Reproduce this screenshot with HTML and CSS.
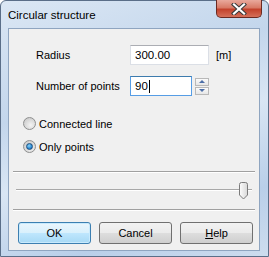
FILE: index.html
```html
<!DOCTYPE html>
<html lang="en">
<head>
  <meta charset="UTF-8" />
  <title>Circular structure</title>
  <link rel="stylesheet" href="styles.css">
</head>
<body>
  <div class="window">
    <div class="titlebar">
      <span class="title">Circular structure</span>
      <div class="close">
        <svg width="16" height="12" viewBox="0 0 16 12">
          <path d="M3 1.5 L13 10.5 M13 1.5 L3 10.5" stroke="#3a3a3a" stroke-width="4.2" stroke-linecap="square"/>
          <path d="M3 1.5 L13 10.5 M13 1.5 L3 10.5" stroke="#ffffff" stroke-width="2.2" stroke-linecap="square"/>
        </svg>
      </div>
    </div>

    <div class="client">
      <div class="row row-first">
        <label class="label">Radius</label>
        <div class="input radius">300.00</div>
        <span class="unit">[m]</span>
      </div>
      <div class="row">
        <label class="label">Number of points</label>
        <div class="input points focused">90<span class="caret"></span></div>
        <div class="spin">
          <div class="spin-btn"><span class="arrow up"></span></div>
          <div class="spin-btn"><span class="arrow down"></span></div>
        </div>
      </div>

      <div class="radios">
        <div class="radio-row"><span class="radio"></span>Connected line</div>
        <div class="radio-row"><span class="radio checked"></span>Only points</div>
      </div>

      <div class="separator"></div>

      <div class="slider">
        <div class="track"></div>
        <svg class="thumb" width="11" height="18" viewBox="0 0 11 18">
          <defs>
            <linearGradient id="tg" x1="0" y1="0" x2="1" y2="0">
              <stop offset="0" stop-color="#fdfdfd"/>
              <stop offset="1" stop-color="#d8d8d8"/>
            </linearGradient>
          </defs>
          <path d="M1.5 2.5 Q1.5 0.5 3.5 0.5 L7.5 0.5 Q9.5 0.5 9.5 2.5 L9.5 13 L5.5 17 L1.5 13 Z" fill="url(#tg)" stroke="#7b7b7b"/>
        </svg>
      </div>

      <div class="separator"></div>

      <div class="buttons">
        <button class="btn default">OK</button>
        <button class="btn">Cancel</button>
        <button class="btn"><u>H</u>elp</button>
      </div>
    </div>
  </div>
</body>
</html>
```

FILE: styles.css
```css
body {
  margin: 0;
  font-family: 'Liberation Sans', Arial, sans-serif;
  font-size: 11px;
  color: #000;
}
.window {
  width: 269px;
  height: 257px;
  box-sizing: border-box;
  padding: 0 9px 0 8px;
  border: 1px solid #5a6e88;
  border-radius: 6px 6px 0 0;
  background: linear-gradient(160deg, #dbe7f4 0%, #c3d6ec 35%, #d9e6f4 55%, #b9cfe9 80%, #cddcee 100%);
  display: flex;
  flex-direction: column;
}
.titlebar {
  height: 27px;
  display: flex;
  align-items: flex-start;
  justify-content: space-between;
}
.title {
  font-size: 11.5px;
  margin-top: 8px;
  margin-left: -1px;
  color: #000;
}
.close {
  width: 46px;
  height: 18px;
  margin-top: -1px;
  margin-right: -3px;
  box-sizing: border-box;
  border: 1px solid #6b2a22;
  border-top: none;
  border-radius: 0 0 5px 5px;
  background: linear-gradient(#e9a99c 0%, #d87a66 45%, #c3422c 55%, #d5705a 100%);
  display: flex;
  align-items: center;
  justify-content: center;
}
.client {
  width: 252px;
  height: 223px;
  box-sizing: border-box;
  margin-left: -1px;
  border: 1px solid #8fa5c0;
  background: #f0f0f0;
  display: flex;
  flex-direction: column;
}
.row {
  display: flex;
  align-items: center;
  height: 20px;
  margin-top: 11px;
  padding-left: 27px;
}
.row-first {
  margin-top: 16px;
}
.label {
  width: 94px;
}
.input {
  height: 20px;
  box-sizing: border-box;
  border: 1px solid #dbdfe6;
  border-top-color: #abadb3;
  background: #fff;
  padding: 3px 0 0 4px;
  font-size: 11.5px;
  display: flex;
  align-items: flex-start;
}
.radius {
  width: 79px;
}
.points {
  width: 62px;
}
.focused {
  border-color: #569de5;
  border-top-color: #3d7bad;
}
.caret {
  width: 1px;
  height: 13px;
  background: #000;
  margin-left: 1px;
}
.unit {
  margin-left: 7px;
}
.spin {
  margin-left: 3px;
  display: flex;
  flex-direction: column;
  gap: 1px;
}
.spin-btn {
  width: 14px;
  height: 8px;
  box-sizing: border-box;
  border: 1px solid #b9b9b9;
  background: linear-gradient(#fbfbfb, #e6e6e6);
  display: flex;
  align-items: center;
  justify-content: center;
}
.arrow {
  width: 0;
  height: 0;
  border-left: 3px solid transparent;
  border-right: 3px solid transparent;
}
.arrow.up {
  border-bottom: 3px solid #4c6fa8;
}
.arrow.down {
  border-top: 3px solid #4c6fa8;
}
.radios {
  margin-top: 21px;
  padding-left: 14px;
  display: flex;
  flex-direction: column;
  gap: 10px;
}
.radio-row {
  display: flex;
  align-items: center;
  height: 13px;
}
.radio {
  width: 13px;
  height: 13px;
  box-sizing: border-box;
  border-radius: 50%;
  border: 1px solid #8e8f8f;
  background: radial-gradient(circle at 60% 65%, #f4f4f4 0%, #d6d6d6 60%, #c2c2c2 100%);
  margin-right: 3px;
  display: flex;
  align-items: center;
  justify-content: center;
}
.radio.checked::after {
  content: "";
  width: 5px;
  height: 5px;
  border-radius: 50%;
  border: 1px solid #1f4f7e;
  background: radial-gradient(circle at 40% 35%, #8ad3f7 0%, #2a8ad4 60%, #0f4f96 100%);
}
.separator {
  height: 1px;
  margin: 0 4px;
  background: #a0a0a0;
  border-bottom: 1px solid #fff;
}
.radios + .separator {
  margin-top: 18px;
}
.slider {
  position: relative;
  height: 36px;
  margin: 0 7px 0 7px;
}
.track {
  position: absolute;
  left: 0;
  right: 0;
  top: 16px;
  height: 1px;
  background: #a8a8a8;
  border-bottom: 1px solid #fff;
}
.thumb {
  position: absolute;
  right: 3px;
  top: 9px;
}
.buttons {
  display: flex;
  gap: 8px;
  padding: 11px 0 0 9px;
}
.btn {
  width: 73px;
  height: 22px;
  box-sizing: border-box;
  border: 1px solid #707070;
  border-radius: 3px;
  background: linear-gradient(#f2f2f2 0%, #ebebeb 48%, #dddddd 52%, #cfcfcf 100%);
  font-family: 'Liberation Sans', Arial, sans-serif;
  font-size: 11px;
  color: #000;
  padding: 0;
}
.btn.default {
  border-color: #3c7fb1;
  box-shadow: inset 0 0 0 1px #c8eafd;
  background: linear-gradient(#eaf6fd 0%, #d9f0fc 48%, #bee6fd 52%, #a7d9f5 100%);
}
```
